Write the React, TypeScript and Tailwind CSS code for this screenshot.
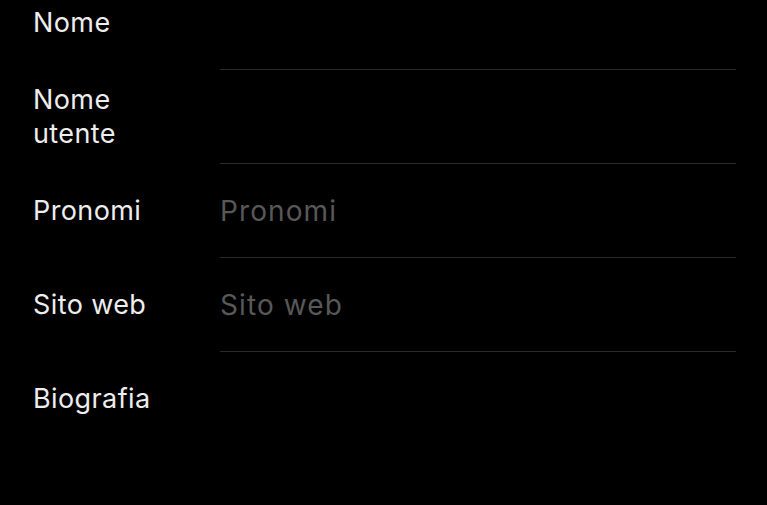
const fields = [
  { label: "Nome", placeholder: "" },
  { label: "Nome\nutente", placeholder: "" },
  { label: "Pronomi", placeholder: "Pronomi" },
  { label: "Sito web", placeholder: "Sito web" },
  { label: "Biografia", placeholder: "", last: true },
];

export default function App() {
  return (
    <div className="h-[505px] w-[767px] overflow-hidden bg-black font-['Inter',sans-serif]">
      <div className="-mt-[24px]">
        {fields.map((f) => (
          <div key={f.label} className="flex h-[94px] items-stretch pl-[33px] pr-[31px]">
            <div className="flex w-[187px] items-center whitespace-pre-line text-[27px] leading-[34px] tracking-[0.4px] text-[#ededed]">
              {f.label}
            </div>
            <div
              className={
                "flex flex-1 items-center text-[28px] tracking-[1.1px] text-[#585858] " +
                (f.last ? "" : "border-b-[1.5px] border-[#2a2a2a]")
              }
            >
              {f.placeholder}
            </div>
          </div>
        ))}
      </div>
    </div>
  );
}
